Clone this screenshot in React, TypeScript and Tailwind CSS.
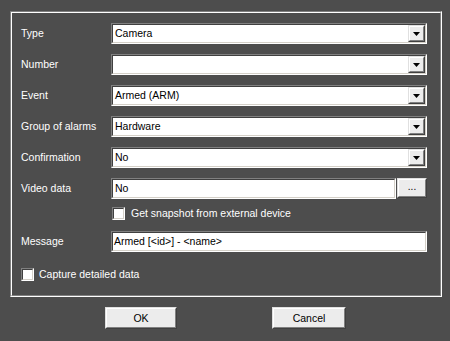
import React from "react";

const font = { fontFamily: '"Liberation Sans", Arial, sans-serif' };

function Sunken({ className = "", children }: { className?: string; children?: React.ReactNode }) {
  return (
    <div className={`border border-t-[#808080] border-l-[#808080] border-b-white border-r-white ${className}`}>
      <div className="h-full w-full border border-t-[#404040] border-l-[#404040] border-b-[#d4d0c8] border-r-[#d4d0c8] bg-white flex items-center">
        {children}
      </div>
    </div>
  );
}

function Raised({ className = "", children }: { className?: string; children?: React.ReactNode }) {
  return (
    <div className={`border border-t-[#e0e0e0] border-l-[#e0e0e0] border-b-[#404040] border-r-[#404040] ${className}`}>
      <div className="h-full w-full border border-t-white border-l-white border-b-[#808080] border-r-[#808080] bg-[#ececec] flex items-center justify-center">
        {children}
      </div>
    </div>
  );
}

function Select({ value }: { value: string }) {
  return (
    <Sunken className="h-[21px] w-[316px]">
      <span className="flex-1 pl-[2px] text-black text-[10.5px] leading-none">{value}</span>
      <Raised className="h-[17px] w-[17px]">
        <svg width="7" height="4" viewBox="0 0 7 4">
          <path d="M0 0H7L3.5 4Z" fill="#000" />
        </svg>
      </Raised>
    </Sunken>
  );
}

function Row({ label, children, mt }: { label: string; children: React.ReactNode; mt: string }) {
  return (
    <div className={`flex items-center ${mt}`}>
      <div className="w-[90px] text-white text-[10.5px] leading-none">{label}</div>
      {children}
    </div>
  );
}

function Check({ className = "" }: { className?: string }) {
  return (
    <div className={`h-[13px] w-[13px] border border-t-[#808080] border-l-[#808080] border-b-white border-r-white ${className}`}>
      <div className="h-full w-full border border-t-[#404040] border-l-[#404040] border-b-[#d4d0c8] border-r-[#d4d0c8] bg-white" />
    </div>
  );
}

export default function App() {
  return (
    <div className="w-[450px] h-[341px] bg-[#4d4d4d] overflow-hidden" style={font}>
      <div className="ml-[10px] mt-[11px] w-[432px] h-[286px] border border-t-[#808080] border-l-[#808080] border-b-white border-r-white">
        <div className="h-full w-full border border-t-white border-l-white border-b-[#808080] border-r-[#808080] pl-[9px] pt-[10px] flex flex-col">
          <Row label="Type" mt="mt-0"><Select value="Camera" /></Row>
          <Row label="Number" mt="mt-[10px]"><Select value="" /></Row>
          <Row label="Event" mt="mt-[10px]"><Select value="Armed (ARM)" /></Row>
          <Row label="Group of alarms" mt="mt-[10px]"><Select value="Hardware" /></Row>
          <Row label="Confirmation" mt="mt-[10px]"><Select value="No" /></Row>
          <Row label="Video data" mt="mt-[10px]">
            <Sunken className="h-[21px] w-[285px]">
              <span className="pl-[2px] text-black text-[10.5px] leading-none">No</span>
            </Sunken>
            <Raised className="ml-[1px] h-[20px] w-[30px] -mt-[1px]">
              <span className="text-black text-[10px] leading-none -mt-[3px]">...</span>
            </Raised>
          </Row>
          <div className="flex items-center mt-[8px] pl-[91px]">
            <Check />
            <span className="ml-[6px] text-white text-[10.5px] leading-none">Get snapshot from external device</span>
          </div>
          <Row label="Message" mt="mt-[11px]">
            <Sunken className="h-[21px] w-[316px]">
              <span className="pl-[1px] text-black text-[10.5px] leading-none">Armed [&lt;id&gt;] - &lt;name&gt;</span>
            </Sunken>
          </Row>
          <div className="flex items-center mt-[16px]">
            <Check />
            <span className="ml-[5px] text-white text-[10.5px] leading-none">Capture detailed data</span>
          </div>
        </div>
      </div>
      <div className="flex mt-[10px] pl-[105px] gap-[95px]">
        <Raised className="h-[22px] w-[72px]">
          <span className="text-black text-[10.5px] leading-none">OK</span>
        </Raised>
        <Raised className="h-[22px] w-[74px]">
          <span className="text-black text-[10.5px] leading-none">Cancel</span>
        </Raised>
      </div>
    </div>
  );
}
